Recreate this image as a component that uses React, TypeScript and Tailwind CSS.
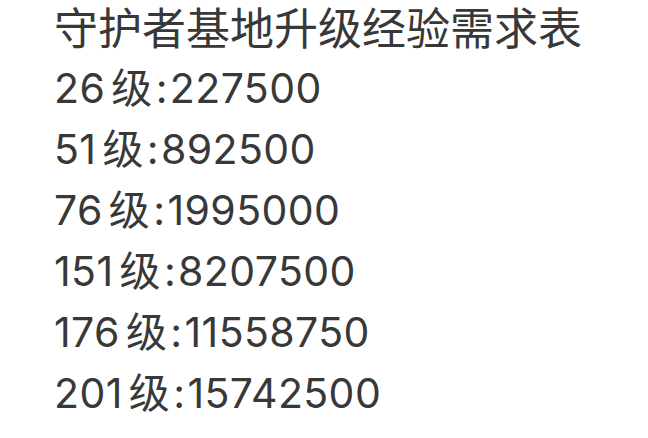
import React from 'react';

const rows = [
  { level: '26', exp: '227500' },
  { level: '51', exp: '892500' },
  { level: '76', exp: '1995000' },
  { level: '151', exp: '8207500' },
  { level: '176', exp: '11558750' },
  { level: '201', exp: '15742500' },
];

export default function App() {
  return (
    <div
      className="flex flex-col w-[648px] h-[438px] bg-white pl-[54px] text-[#383838] overflow-hidden"
      style={{ fontFamily: 'Inter, "Noto Sans CJK SC", sans-serif' }}
    >
      <h1 className="text-[44px] leading-[58px]">守护者基地升级经验需求表</h1>
      {rows.map((r) => (
        <p key={r.level} className="text-[41px] leading-[61px] tracking-[0.4px]">
          {r.level}
          <span className="ml-[6px] mr-[3px]">级</span>
          <span className="mr-[2px]">:</span>
          {r.exp}
        </p>
      ))}
    </div>
  );
}
